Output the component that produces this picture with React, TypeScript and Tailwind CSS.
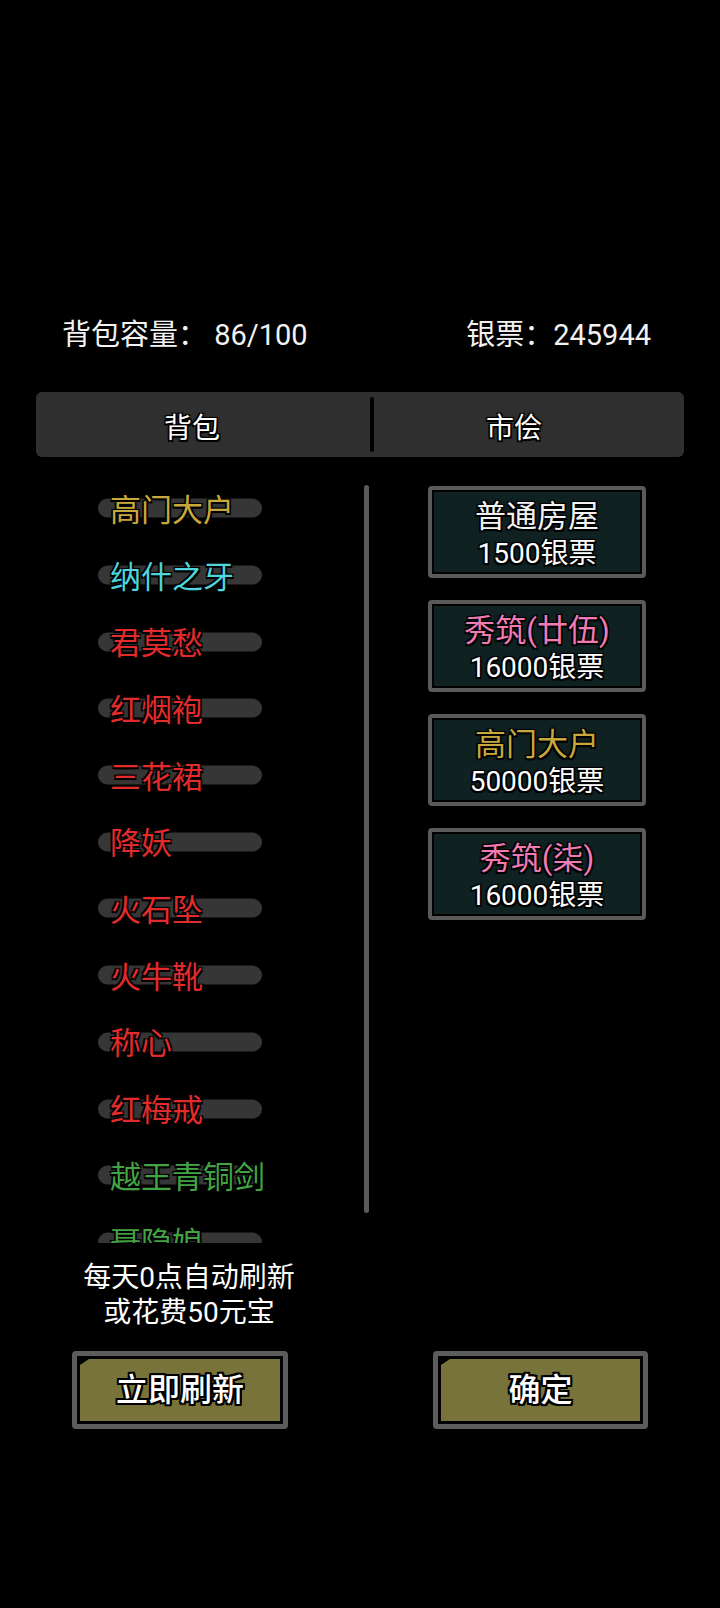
const font = "font-['Roboto','Noto_Sans_CJK_SC',sans-serif]";
const outline =
  "[text-shadow:-1.5px_-1.5px_0_#000,1.5px_-1.5px_0_#000,-1.5px_1.5px_0_#000,1.5px_1.5px_0_#000,0_0_3px_#000]";
const thickOutline =
  "[text-shadow:-2px_-2px_0_#000,2px_-2px_0_#000,-2px_2px_0_#000,2px_2px_0_#000,0_-2px_0_#000,0_2px_0_#000,-2px_0_0_#000,2px_0_0_#000]";

const bag = [
  { name: "高门大户", color: "text-[#c9a83b]" },
  { name: "纳什之牙", color: "text-[#4fd5dc]" },
  { name: "君莫愁", color: "text-[#e22b2b]" },
  { name: "红烟袍", color: "text-[#e22b2b]" },
  { name: "三花裙", color: "text-[#e22b2b]" },
  { name: "降妖", color: "text-[#e22b2b]" },
  { name: "火石坠", color: "text-[#e22b2b]" },
  { name: "火牛靴", color: "text-[#e22b2b]" },
  { name: "称心", color: "text-[#e22b2b]" },
  { name: "红梅戒", color: "text-[#e22b2b]" },
  { name: "越王青铜剑", color: "text-[#43a343]" },
  { name: "聂隐娘", color: "text-[#43a343]" },
];

const market = [
  { name: "普通房屋", price: 1500, color: "text-[#f2f2f2]" },
  { name: "秀筑(廿伍)", price: 16000, color: "text-[#f07bb4]" },
  { name: "高门大户", price: 50000, color: "text-[#c9a83b]" },
  { name: "秀筑(柒)", price: 16000, color: "text-[#f07bb4]" },
];

function OliveButton({ label, className }: { label: string; className: string }) {
  return (
    <button
      className={`h-[78px] rounded-[4px] border-[5px] border-[#5c5c5c] bg-black p-[3px] ${className}`}
    >
      <div className="flex h-full w-full items-center justify-center bg-[#77733a] [clip-path:polygon(9px_0,100%_0,100%_100%,0_100%,0_6px)]">
        <span className={`text-[32px] font-medium leading-none text-white ${thickOutline}`}>
          {label}
        </span>
      </div>
    </button>
  );
}

export default function App() {
  return (
    <div className={`flex h-[1608px] w-[720px] flex-col bg-black text-white ${font}`}>
      {/* header */}
      <div className="mt-[313px] flex h-[46px] items-center justify-between pl-[62px] pr-[69px] text-[29px] text-[#f2f2f2]">
        <span>背包容量： 86/100</span>
        <span>银票：245944</span>
      </div>

      {/* tabs */}
      <div className="mx-[36px] mt-[33px] flex h-[65px] items-center rounded-[6px] bg-[#2f2f2f]">
        <div
          className={`flex w-[334px] justify-center pr-[22px] pt-[8px] text-[28px] text-white ${outline}`}
        >
          背包
        </div>
        <div className="h-[55px] w-[4px] rounded-full bg-black" />
        <div
          className={`flex flex-1 justify-center pr-[30px] pt-[8px] text-[28px] text-white ${outline}`}
        >
          市侩
        </div>
      </div>

      {/* content */}
      <div className="mt-[20px] flex">
        <div className="ml-[36px] flex">
          <div className="h-[766px] w-[328px] overflow-hidden pl-[62px]">
            {bag.map((item) => (
              <div key={item.name} className="relative flex h-[66.7px] items-center">
                <div className="absolute left-0 top-1/2 h-[19px] w-[164px] -translate-y-[60%] rounded-full bg-[#363636]" />
                <span
                  className={`relative pl-[12px] text-[31px] leading-none ${item.color} ${outline}`}
                >
                  {item.name}
                </span>
              </div>
            ))}
          </div>
          <div className="mt-[8px] h-[728px] w-[5px] rounded-full bg-[#5a5a5a]" />
        </div>

        <div className="ml-[59px] mt-[9px] flex flex-col gap-[22px]">
          {market.map((m) => (
            <div
              key={m.name + m.price}
              className="h-[92px] w-[218px] rounded-[4px] border-[4px] border-[#5a5a5a] bg-black p-[2px]"
            >
              <div className="flex h-full flex-col items-center bg-[#0f2121] pt-[6px]">
                <span className={`text-[31px] leading-[37px] ${m.color} ${outline}`}>{m.name}</span>
                <span className={`text-[28px] leading-[37px] text-white ${outline}`}>
                  {m.price}银票
                </span>
              </div>
            </div>
          ))}
        </div>
      </div>

      {/* refresh note */}
      <div className="ml-[39px] mt-[17px] w-[300px] text-center text-[28px] leading-[35px] text-white">
        <div>每天0点自动刷新</div>
        <div>或花费50元宝</div>
      </div>

      {/* buttons */}
      <div className="mt-[21px] flex">
        <OliveButton label="立即刷新" className="ml-[72px] w-[216px]" />
        <OliveButton label="确定" className="ml-[145px] w-[215px]" />
      </div>
    </div>
  );
}
